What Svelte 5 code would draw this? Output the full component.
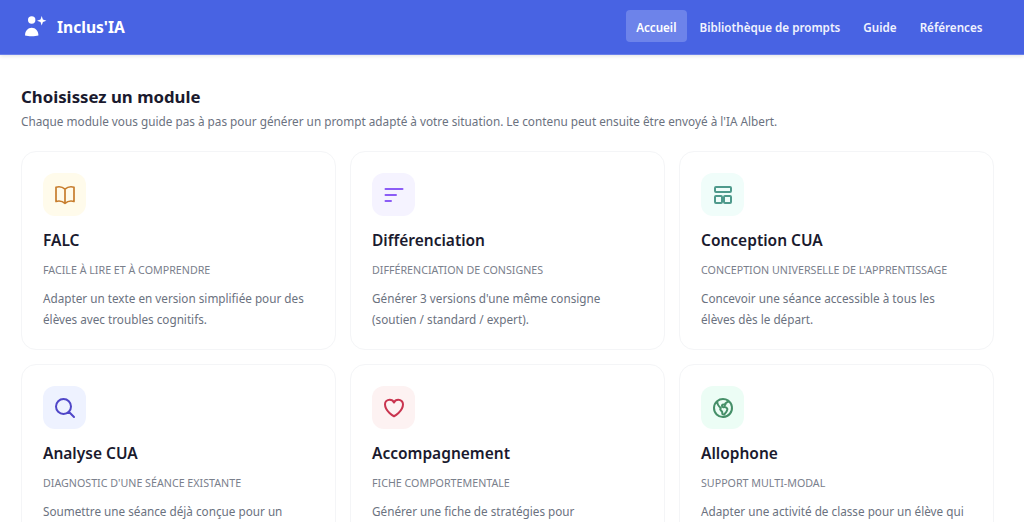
<script>
    const links = ["Accueil", "Bibliothèque de prompts", "Guide", "Références"]

    const modules = [
        { name: "FALC", sub: "Facile à lire et à comprendre", desc: "Adapter un texte en version simplifiée pour des élèves avec troubles cognitifs.", icon: "book", bg: "#fffbeb", color: "#c77d2e" },
        { name: "Différenciation", sub: "Différenciation de consignes", desc: "Générer 3 versions d'une même consigne (soutien / standard / expert).", icon: "lines", bg: "#f5f3ff", color: "#8b5cf6" },
        { name: "Conception CUA", sub: "Conception universelle de l'apprentissage", desc: "Concevoir une séance accessible à tous les élèves dès le départ.", icon: "layout", bg: "#f0fdfa", color: "#4f9a8c" },
        { name: "Analyse CUA", sub: "Diagnostic d'une séance existante", desc: "Soumettre une séance déjà conçue pour un diagnostic.", icon: "search", bg: "#eef2ff", color: "#4f46c8" },
        { name: "Accompagnement", sub: "Fiche comportementale", desc: "Générer une fiche de stratégies pour accompagner un élève.", icon: "heart", bg: "#fdf2f2", color: "#c9344f" },
        { name: "Allophone", sub: "Support multi-modal", desc: "Adapter une activité de classe pour un élève qui apprend le français.", icon: "globe", bg: "#ecfdf5", color: "#458f68" }
    ]
</script>

<header>
    <div class="brand">
        <svg width="24" height="24" viewBox="0 0 24 24" fill="#fff" aria-hidden="true">
            <circle cx="7.700" cy="5" r="3.700" />
            <path d="M1 20.500c0-4.600 2.900-7.700 6.700-7.700s6.700 3.100 6.700 7.700c-1.800.5-4.200.7-6.700.7s-4.900-.2-6.700-.7z" />
            <path d="M17.700 1l1.200 3.500 3.500 1.200-3.500 1.200-1.200 3.500-1.200-3.500L13 5.700l3.500-1.200z" />
        </svg>
        <span>Inclus'IA</span>
    </div>
    <nav>
        {#each links as link, i}
            <a href="#top" class:active={i === 0}>{link}</a>
        {/each}
    </nav>
</header>

<main>
    <h1>Choisissez un module</h1>
    <p class="intro">Chaque module vous guide pas à pas pour générer un prompt adapté à votre situation. Le contenu peut ensuite être envoyé à l'IA Albert.</p>

    <div class="grid">
        {#each modules as m}
            <article class="card">
                <div class="icon" style="background:{m.bg};color:{m.color}">
                    <svg width="24" height="24" viewBox="0 0 24 24" fill="none" stroke="currentColor" stroke-width="1.700" stroke-linecap="round" stroke-linejoin="round" aria-hidden="true">
                        {#if m.icon === "book"}
                            <path d="M12 6.042A8.967 8.967 0 006 3.750c-1.052 0-2.062.18-3 .512v14.250A8.987 8.987 0 016 18c2.305 0 4.408.867 6 2.292m0-14.250a8.966 8.966 0 016-2.292c1.052 0 2.062.18 3 .512v14.250A8.987 8.987 0 0018 18a8.967 8.967 0 00-6 2.292m0-14.250v14.250" />
                        {:else if m.icon === "lines"}
                            <path stroke-width="2" d="M3.500 6h17M3.500 12h10.500M3.500 18h5.500" />
                        {:else if m.icon === "layout"}
                            <g stroke-width="2">
                                <rect x="4" y="4" width="16" height="5" rx="1" />
                                <rect x="4" y="13" width="7" height="7" rx="1" />
                                <rect x="13" y="13" width="7" height="7" rx="1" />
                            </g>
                        {:else if m.icon === "search"}
                            <path stroke-width="2" d="M21 21l-5.197-5.197m0 0A7.500 7.500 0 105.196 5.196a7.500 7.500 0 0010.607 10.607z" />
                        {:else if m.icon === "heart"}
                            <path stroke-width="2" d="M21 8.250c0-2.485-2.099-4.500-4.688-4.500-1.935 0-3.597 1.126-4.312 2.733-.715-1.607-2.377-2.733-4.313-2.733C5.100 3.750 3 5.765 3 8.250c0 7.220 9 12 9 12s9-4.780 9-12z" />
                        {:else}
                            <path stroke-width="2" d="M6.115 5.190l.319 1.913A6 6 0 008.110 10.360L9.750 12l-.387.775c-.217.433-.132.956.21 1.298l1.348 1.348c.21.21.329.497.329.795v1.089c0 .426.24.815.622 1.006l.153.076c.433.217.956.132 1.298-.21l.723-.723a8.700 8.700 0 002.288-4.042 1.087 1.087 0 00-.358-1.099l-1.330-1.108c-.251-.21-.582-.299-.905-.245l-1.170.195a1.125 1.125 0 01-.98-.314l-.295-.295a1.125 1.125 0 010-1.591l.13-.132a1.125 1.125 0 011.300-.21l.603.302a.809.809 0 001.086-1.086L14.250 7.500l1.256-.837a4.500 4.500 0 001.528-1.732l.146-.292M6.115 5.190A9 9 0 1017.18 4.640M6.115 5.190A8.965 8.965 0 0112 3c1.929 0 3.716.607 5.180 1.640" />
                        {/if}
                    </svg>
                </div>
                <h2>{m.name}</h2>
                <div class="sub">{m.sub}</div>
                <p>{m.desc}</p>
            </article>
        {/each}
    </div>
</main>

<style>
    :global(body) {
        background: #fff;
        overflow: hidden;
        font-family: "Noto Sans", "Open Sans", sans-serif;
    }
    header {
        height: 54px;
        box-sizing: content-box;
        display: flex;
        align-items: center;
        justify-content: space-between;
        padding: 0 31px 0 24px;
        background: #4863e3;
        border-bottom: 1px solid #6a80ea;
        box-shadow: 0 1px 4px rgba(0, 0, 0, 0.12);
    }
    .brand {
        display: flex;
        align-items: center;
        gap: 9px;
        color: #fff;
        font-size: 15.600px;
        font-weight: 700;
    }
    nav {
        display: flex;
        gap: 2px;
        margin-top: -2px;
    }
    nav a {
        padding: 8px 10.500px 4px;
        border-radius: 4px;
        line-height: 20px;
        color: #f0f2fe;
        font-size: 11.650px;
        font-weight: 600;
        text-decoration: none;
    }
    nav a.active {
        background: #6d83ea;
        color: #fff;
    }
    main {
        padding: 31px 30px 0 21px;
    }
    h1 {
        margin: 0;
        font-size: 16.800px;
        line-height: 21px;
        font-weight: 700;
        color: #1a1a2e;
    }
    .intro {
        margin: 5px 0 0;
        font-size: 11.770px;
        line-height: 18px;
        color: #6b7280;
    }
    .grid {
        margin-top: 21px;
        display: grid;
        grid-template-columns: repeat(3, 1fr);
        gap: 14px;
    }
    .card {
        padding: 21px;
        height: 199px;
        box-sizing: border-box;
        border: 1px solid #f4f5f7;
        border-radius: 15px;
    }
    .icon {
        width: 43px;
        height: 43px;
        display: flex;
        align-items: center;
        justify-content: center;
        border-radius: 12px;
    }
    h2 {
        margin: 13px 0 0;
        font-size: 15.500px;
        line-height: 22px;
        font-weight: 600;
        color: #1a1a2e;
    }
    .sub {
        margin-top: 12px;
        font-size: 10.700px;
        line-height: 14px;
        text-transform: uppercase;
        color: #7a808c;
    }
    .card p {
        margin: 11px 0 0;
        font-size: 11.730px;
        line-height: 21px;
        color: #6b7280;
    }
</style>
